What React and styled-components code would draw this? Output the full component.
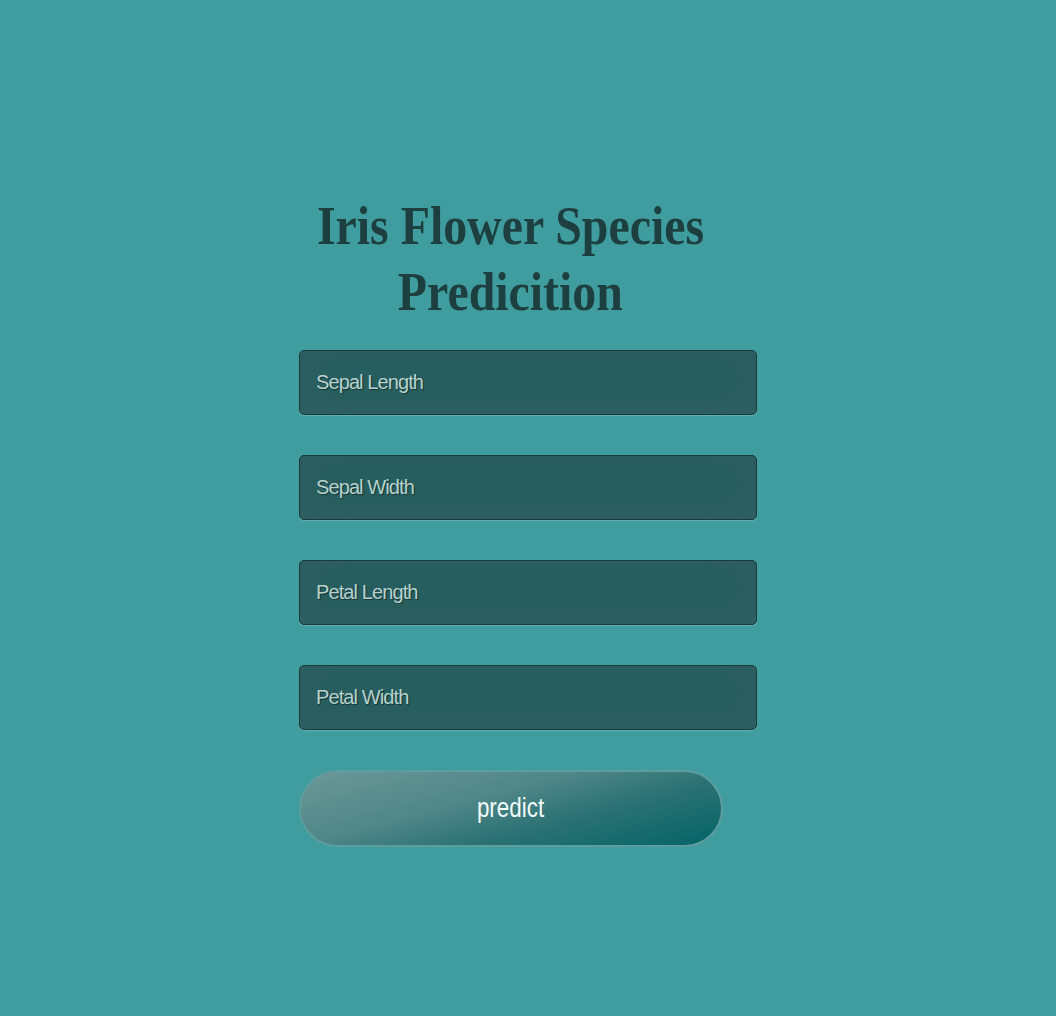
import React from 'react';
import styled, { createGlobalStyle } from 'styled-components';

const GlobalStyle = createGlobalStyle`
  html, body {
    margin: 0;
    padding: 0;
    background: #409d9f;
  }
`

const Page = styled.div`
  min-height: 1016px;
  display: flex;
  justify-content: center;
  padding-top: 193px;
  box-sizing: border-box;
`

const Form = styled.form`
  width: 458px;
  display: flex;
  flex-direction: column;
`

const Title = styled.h1`
  width: 423px;
  margin: 0 0 25px;
  display: flex;
  flex-direction: column;
  align-items: center;
  white-space: nowrap;
  font-family: "Liberation Serif", "Times New Roman", serif;
  font-weight: bold;
  font-size: 55px;
  line-height: 66px;
  color: #1d3f3f;
`

const TitleLine = styled.span`
  transform: scaleX(0.87);
`

const Input = styled.input`
  box-sizing: border-box;
  width: 458px;
  height: 65px;
  margin-bottom: 40px;
  padding: 0 16px;
  border: 1px solid #173a3b;
  border-radius: 5px;
  background: #265e5f;
  box-shadow: inset 0 -5px 45px rgba(100, 100, 100, 0.2), 0 1px 1px rgba(255, 255, 255, 0.2);
  font-family: "Liberation Sans", Arial, sans-serif;
  font-size: 20px;
  letter-spacing: -0.9px;
  color: #b8d3cf;
  outline: none;

  &::placeholder {
    color: #b6d2ce;
    text-shadow: 1px 1px 1px rgba(0, 0, 0, 0.45);
  }
`

const Button = styled.button`
  width: 424px;
  height: 77px;
  border: 2px solid #5e9d9d;
  border-radius: 40px;
  background: linear-gradient(165deg, #6d9898 0%, #4f8687 40%, #2a7173 65%, #036466 100%);
  font-family: "Liberation Sans", Arial, sans-serif;
  font-size: 27px;
  color: #f2fbfb;
  cursor: pointer;
`

const ButtonLabel = styled.span`
  display: inline-block;
  transform: scaleX(0.83);
`

const fields = ['Sepal Length', 'Sepal Width', 'Petal Length', 'Petal Width'];

const App = () => (
  <>
    <GlobalStyle />
    <Page>
      <Form onSubmit={e => e.preventDefault()}>
        <Title>
          <TitleLine>Iris Flower Species</TitleLine>
          <TitleLine>Predicition</TitleLine>
        </Title>
        {fields.map(f => (
          <Input key={f} type="text" placeholder={f} />
        ))}
        <Button type="submit"><ButtonLabel>predict</ButtonLabel></Button>
      </Form>
    </Page>
  </>
)

export default App;
